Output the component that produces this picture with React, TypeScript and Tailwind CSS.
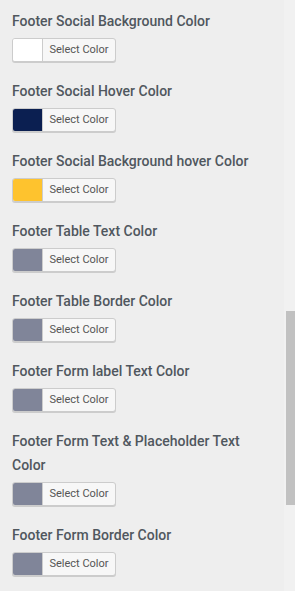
import React from "react";

const items: { label: string; color: string }[] = [
  { label: "Footer Social Background Color", color: "#ffffff" },
  { label: "Footer Social Hover Color", color: "#0b1f51" },
  { label: "Footer Social Background hover Color", color: "#fec32e" },
  { label: "Footer Table Text Color", color: "#808599" },
  { label: "Footer Table Border Color", color: "#808599" },
  { label: "Footer Form label Text Color", color: "#808599" },
  { label: "Footer Form Text & Placeholder Text Color", color: "#808599" },
  { label: "Footer Form Border Color", color: "#808599" },
];

export default function App() {
  return (
    <div className="relative w-[295px] h-[591px] overflow-hidden bg-[#eeeeee]" style={{ fontFamily: "Roboto, 'Liberation Sans', sans-serif" }}>
      <div className="w-[284px] pl-3 pr-2 pt-[9px] flex flex-col">
        {items.map((it, i) => (
          <div key={i} className="flex flex-col mb-[17px]">
            <div className="text-[14px] leading-[24px] font-medium text-[#50575e]">{it.label}</div>
            <div className="mt-[5px] flex h-[24px] w-[104px] rounded-[3px] border border-[#cccccc] bg-[#f7f7f7] overflow-hidden shadow-[0_1px_0_#cccccc]">
              <div className="w-[30px] h-full border-r border-[#cccccc]" style={{ background: it.color }} />
              <div className="flex-1 flex items-center justify-center text-[11px] text-[#555555]">Select Color</div>
            </div>
          </div>
        ))}
      </div>
      <div className="absolute top-0 right-0 w-[11px] h-full bg-[#f1f1f1]">
        <div className="absolute left-[2px] right-0 top-[311px] h-[194px] bg-[#c1c1c1]" />
      </div>
    </div>
  );
}
